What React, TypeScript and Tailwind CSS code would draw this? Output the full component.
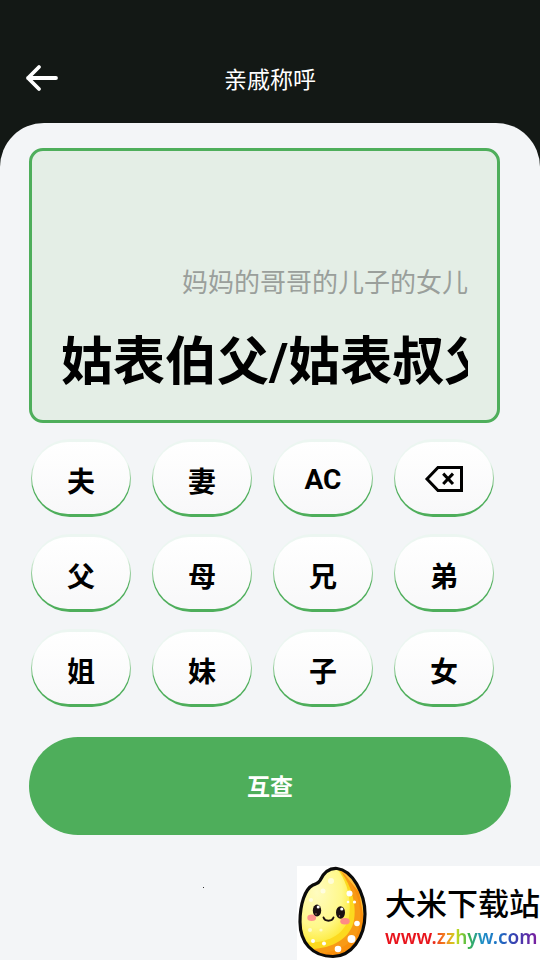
import { useState, type ReactNode } from "react";
import clsx from "clsx";

type Key = { id: string; label: string; icon?: ReactNode; latin?: boolean };

function BackIcon() {
  return (
    <svg viewBox="0 0 36 28" className="h-7 w-9" fill="none" stroke="#fff" strokeWidth="3.8" strokeLinecap="round" strokeLinejoin="round">
      <path d="M4 14H32M15 3L4 14l11 11" />
    </svg>
  );
}

function DeleteIcon() {
  return (
    <svg viewBox="0 0 40 28" className="h-7 w-10" fill="none" stroke="#000" strokeWidth="3">
      <path d="M14 2.5H37.5V25.5H14L3 14Z" />
      <path d="M19.2 8.6l9.8 10.4M29 8.6l-9.800 10.400" />
    </svg>
  );
}

function RiceMascot() {
  return (
    <svg viewBox="7 6 76 94" className="h-[94px] w-[76px] shrink-0" aria-hidden="true">
      <defs>
        <radialGradient id="grain" cx="0.4" cy="0.35" r="0.65">
          <stop offset="0" stopColor="#fffcc0" />
          <stop offset="0.7" stopColor="#fff88a" />
          <stop offset="1" stopColor="#feec45" />
        </radialGradient>
        <clipPath id="grainShape">
          <path d="M30 20.500C34 12 40 8 47 8.500C62 10 75 33 75 54C75 78 61 96.500 43 96.500C22 96.500 10 82 10 62C10 44 15 29 23 25C27 23 28.500 23.500 30 20.500Z" />
        </clipPath>
      </defs>
      <g clipPath="url(#grainShape)">
        <rect x="7" y="6" width="76" height="94" fill="#f89a16" />
        <path d="M45 6C66 22 76 46 71 67C66 84 50 93 34 95L60 98L80 70L76 30Z" fill="#fdbf3c" />
        <path d="M52 12C68 28 73 50 69 68C64 84 48 92 26 94L44 99L66 86L74 60L69 32Z" fill="#f98f0c" />
        <path d="M5 5H45C60 20 67 42 64 60C61 78 42 90 16 89L5 80Z" fill="#fcd91f" />
        <path d="M5 5H44C57 19 62 39 59 57C55 74 37 85 12 82L5 75Z" fill="url(#grain)" />
        <g fill="#fff">
          <circle cx="59.500" cy="33.500" r="3" />
          <circle cx="58" cy="42" r="1.300" />
          <circle cx="64.500" cy="42" r="1.600" />
          <circle cx="67" cy="63.500" r="2.800" />
          <circle cx="61.500" cy="79" r="4" />
          <circle cx="71" cy="76" r="1.500" />
          <circle cx="48" cy="89" r="3.300" />
          <circle cx="34" cy="83.500" r="2" />
          <circle cx="23" cy="81" r="2" />
        </g>
        <g fill="#fff" fillOpacity="0.6">
          <circle cx="41" cy="21" r="3" />
          <circle cx="33" cy="31" r="2.500" />
          <circle cx="21" cy="40" r="2" />
          <circle cx="20" cy="70" r="2" />
          <circle cx="31" cy="70" r="1.600" />
        </g>
      </g>
      <path
        d="M30 20.500C34 12 40 8 47 8.500C62 10 75 33 75 54C75 78 61 96.500 43 96.500C22 96.500 10 82 10 62C10 44 15 29 23 25C27 23 28.500 23.500 30 20.500Z"
        fill="none"
        stroke="#0b0b0b"
        strokeWidth="3.200"
        strokeLinejoin="round"
      />
      <ellipse cx="21.700" cy="57.700" rx="4.400" ry="3.200" fill="#ff958c" />
      <ellipse cx="55" cy="61.200" rx="4.700" ry="3.200" fill="#ff8a85" />
      <ellipse cx="27" cy="50.500" rx="4.200" ry="6" fill="#1b1010" />
      <ellipse cx="50.500" cy="52.500" rx="4.500" ry="6.200" fill="#1b1010" />
      <circle cx="28.200" cy="47" r="1.500" fill="#fff" />
      <circle cx="51.800" cy="49" r="1.600" fill="#fff" />
      <circle cx="26" cy="54" r="0.700" fill="#c98a7a" />
      <circle cx="49.500" cy="56" r="0.700" fill="#c98a7a" />
      <path d="M33.500 57.500C35 61.800 42 61.800 43.500 57.500" fill="none" stroke="#1b1010" strokeWidth="1.900" strokeLinecap="round" />
    </svg>
  );
}

const KEYS: Key[] = [
  { id: "husband", label: "夫" },
  { id: "wife", label: "妻" },
  { id: "clear", label: "AC", latin: true },
  { id: "delete", label: "删除", icon: <DeleteIcon /> },
  { id: "father", label: "父" },
  { id: "mother", label: "母" },
  { id: "elder-brother", label: "兄" },
  { id: "younger-brother", label: "弟" },
  { id: "elder-sister", label: "姐" },
  { id: "younger-sister", label: "妹" },
  { id: "son", label: "子" },
  { id: "daughter", label: "女" },
];

// what each key adds to the chain
const TERMS: Record<string, string> = {
  husband: "老公",
  wife: "老婆",
  father: "爸爸",
  mother: "妈妈",
  "elder-brother": "哥哥",
  "younger-brother": "弟弟",
  "elder-sister": "姐姐",
  "younger-sister": "妹妹",
  son: "儿子",
  daughter: "女儿",
};

export default function App() {
  const [chain, setChain] = useState<string[]>(["妈妈", "哥哥", "儿子", "女儿"]);
  const [result, setResult] = useState("姑表伯父/姑表叔父");

  function handleKey(id: string) {
    setResult("");
    if (id === "clear") setChain([]);
    else if (id === "delete") setChain((prev) => prev.slice(0, -1));
    else setChain((prev) => [...prev, TERMS[id]]);
  }

  return (
    <div className="flex min-h-screen flex-col bg-[#131815] font-['Roboto','Noto_Sans_CJK_SC',sans-serif]">
      <header className="grid grid-cols-[1fr_auto_1fr] items-center px-6 pt-[33px]">
        <button type="button" aria-label="返回" className="flex h-[90px] w-9 items-center">
          <BackIcon />
        </button>
        <h1 className="pt-1.5 text-[23px] leading-8 text-white">亲戚称呼</h1>
      </header>

      <main className="flex flex-1 flex-col rounded-t-[44px] bg-[#f3f5f7] pt-[25px]">
        <section className="mr-10 ml-[29px] flex h-[275px] flex-col justify-end rounded-[14px] border-3 border-[#4eae5b] bg-[#e4eee6] px-[29px] pb-[21px]">
          <p className="text-right text-[26px] leading-10 text-[#9a9f9b]">{chain.join("的")}</p>
          <p className="mt-6 h-[72px] overflow-hidden text-[52px] leading-[72px] font-bold whitespace-nowrap text-black">{result}</p>
        </section>

        <div className="mt-4 mr-[46px] ml-[31px] grid grid-cols-4 gap-x-[21px] gap-y-[17px]">
          {KEYS.map((key) => (
            <button
              key={key.id}
              type="button"
              aria-label={key.label}
              onClick={() => handleKey(key.id)}
              className="h-[78px] rounded-full bg-linear-to-b from-[#ecf6f1] from-30% to-[#4eae5b] to-65% px-px pt-[3px] pb-[3px]"
            >
              <span
                className={clsx(
                  "flex h-full items-center justify-center rounded-full bg-linear-to-b from-white to-[#f8f8f9] text-[28px] leading-10 font-bold text-black",
                  key.icon && "pt-px",
                  key.latin && "pt-[3px]",
                  !key.icon && !key.latin && "pt-2.5"
                )}
              >
                {key.icon ?? key.label}
              </span>
            </button>
          ))}
        </div>

        <button type="button" className="mx-[29px] mt-[30px] h-[98px] rounded-full bg-[#4eae5b] pt-1 text-[23px] leading-8 font-bold text-white">
          互查
        </button>

        <footer className="mt-auto flex items-start justify-end">
          <span className="mt-[21px] mr-[93px] size-px bg-[#333]" />
          <div className="flex h-[94px] w-[243px] items-center overflow-hidden bg-white">
            <RiceMascot />
            <div className="ml-3 pt-3 whitespace-nowrap">
              <p className="text-[31px] leading-9 font-medium text-black">大米下载站</p>
              <a
                href="#"
                className="block w-fit bg-[linear-gradient(90deg,#e8141c_0%,#e8141c_30%,#f58a1f_40%,#c9dc1f_47%,#3ab54a_55%,#1e8fc8_64%,#1d6fc4_75%,#3a3fb0_86%,#7a1fa0_100%)] bg-clip-text font-['Noto_Sans',sans-serif] text-[19px] leading-7 font-semibold text-transparent"
              >
                www.zzhyw.com
              </a>
            </div>
          </div>
        </footer>
      </main>
    </div>
  );
}
